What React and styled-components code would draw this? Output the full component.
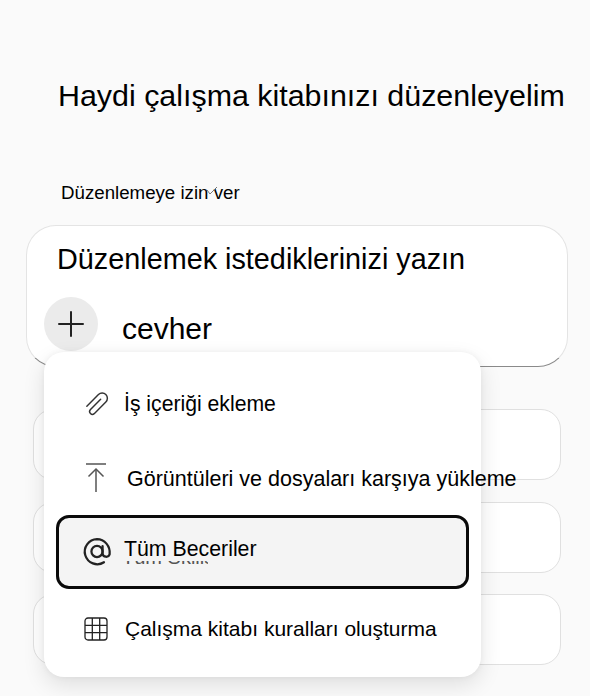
import React from 'react'
import styled, { createGlobalStyle } from 'styled-components'

const GlobalStyle = createGlobalStyle`
  html, body { margin: 0; padding: 0; background: #fafafa; }
  body { font-family: "Liberation Sans", Arial, sans-serif; color: #000; }
`

const Page = styled.div`
  position: relative;
  width: 590px;
  height: 696px;
  overflow: hidden;
  padding: 75px 22px 0 26px;
  box-sizing: border-box;
`

const Heading = styled.h1`
  margin: 0 0 0 32px;
  font-size: 30.4px;
  line-height: 40px;
  font-weight: 400;
  white-space: nowrap;
`

const PermissionRow = styled.div`
  position: relative;
  margin: 62px 0 0 35px;
  font-size: 18.7px;
  line-height: 32px;
  height: 32px;
`

const Tick = styled.svg`
  position: absolute;
  left: 145px;
  top: 9px;
`

const PromptCard = styled.div`
  margin-top: 16px;
  height: 142px;
  box-sizing: border-box;
  background: #fff;
  border: 1px solid #e4e4e4;
  border-bottom-color: #8a8a8a;
  border-radius: 30px;
  padding: 13px 17px 0 17px;
`

const PromptTitle = styled.div`
  margin-left: 13px;
  font-size: 28.8px;
  line-height: 40px;
  white-space: nowrap;
`

const PromptRow = styled.div`
  display: flex;
  align-items: center;
  gap: 24px;
  margin-top: 18px;
`

const AddButton = styled.div`
  width: 54px;
  height: 54px;
  border-radius: 50%;
  background: #ebebeb;
  display: flex;
  align-items: center;
  justify-content: center;
`

const PromptValue = styled.div`
  font-size: 30px;
  line-height: 40px;
  margin-top: 10px;
`

const Suggestions = styled.div`
  display: flex;
  flex-direction: column;
  gap: 21.5px;
  margin: 42px 7px 0;
`

const Suggestion = styled.div`
  height: 71px;
  box-sizing: border-box;
  background: #fff;
  border: 1px solid #e0e0e0;
  border-radius: 20px;
`

const Menu = styled.div`
  position: absolute;
  left: 44px;
  top: 352px;
  width: 437px;
  height: 325px;
  box-sizing: border-box;
  padding: 17px 12px 0;
  background: #fff;
  border-radius: 20px;
  box-shadow: 0 8px 22px rgba(0, 0, 0, 0.11), 0 0 6px rgba(0, 0, 0, 0.05);
`

const MenuItem = styled.div`
  display: flex;
  align-items: center;
  box-sizing: border-box;
  height: ${p => p.$height}px;
  padding-left: ${p => p.$iconLeft}px;
  gap: ${p => p.$gap}px;
  white-space: nowrap;
  ${p => p.$active && `
    position: relative;
    margin-bottom: 2px;
    background: #f4f4f4;
    border: 3px solid #0a0a0a;
    border-radius: 13px;
  `}
`

const MenuIcon = styled.svg`
  flex: none;
  color: #3a3a3a;
`

const MenuText = styled.span`
  position: relative;
  top: ${p => p.$shift || 0}px;
  font-size: ${p => p.$size}px;
`

const GhostText = styled.span`
  position: absolute;
  left: -2px;
  top: 24px;
  height: 4px;
  width: 86px;
  overflow: hidden;
  color: #555;
  font-size: 20px;
  line-height: 4px;
`

const GhostInner = styled.span`
  display: block;
  margin-top: -15px;
  line-height: 22px;
`

const PaperclipIcon = () => (
  <MenuIcon width="27" height="30" viewBox="0 0 26 28" fill="none" stroke="#333" strokeWidth="1.4" strokeLinecap="round">
    <path d="M17 9.5 L7 19.5 a2.7 2.7 0 0 0 3.8 3.8 L22 12 a5 5 0 0 0 -7.1 -7.1 L3.7 16.2" />
  </MenuIcon>
)

const UploadIcon = () => (
  <MenuIcon width="22" height="30" viewBox="0 0 22 30" fill="none" stroke="#555" strokeWidth="1.5">
    <path d="M1 2h20" />
    <path d="M11 7v23" />
    <path d="M3.5 14.5 11 7l7.5 7.5" />
  </MenuIcon>
)

const AtIcon = () => (
  <MenuIcon width="30" height="30" viewBox="0 0 28 28" fill="none" stroke="#222" strokeWidth="2.1" strokeLinecap="round">
    <circle cx="14" cy="13.5" r="5.2" />
    <path d="M19.2 8.5v7a3.4 3.4 0 0 0 6.6 0.6 C26.6 8.5 21 2 14 2 A11.7 11.7 0 1 0 20.5 23.6" />
  </MenuIcon>
)

const GridIcon = () => (
  <MenuIcon width="24" height="24" viewBox="0 0 24 24" fill="none" stroke="#222" strokeWidth="1.3">
    <rect x="1" y="1" width="22" height="22" rx="3" />
    <path d="M8.3 1v22M15.7 1v22M1 8.3h22M1 15.7h22" />
  </MenuIcon>
)

export default function App() {
  return (
    <Page>
      <GlobalStyle />
      <Heading>Haydi çalışma kitabınızı düzenleyelim</Heading>
      <PermissionRow>
        Düzenlemeye izin ver
        <Tick width="12" height="10" viewBox="0 0 12 10" fill="none" stroke="#777" strokeWidth="1">
          <path d="M1 4l3 4 7-7" />
        </Tick>
      </PermissionRow>
      <PromptCard>
        <PromptTitle>Düzenlemek istediklerinizi yazın</PromptTitle>
        <PromptRow>
          <AddButton>
            <svg width="28" height="28" viewBox="0 0 28 28" fill="none" stroke="#222" strokeWidth="2" strokeLinecap="round">
              <path d="M14 2v24M2 14h24" />
            </svg>
          </AddButton>
          <PromptValue>cevher</PromptValue>
        </PromptRow>
      </PromptCard>
      <Suggestions>
        <Suggestion />
        <Suggestion />
        <Suggestion />
      </Suggestions>
      <Menu>
        <MenuItem $height={70} $iconLeft={27} $gap={14}>
          <PaperclipIcon />
          <MenuText $size={21.2}>İş içeriği ekleme</MenuText>
        </MenuItem>
        <MenuItem $height={76} $iconLeft={29} $gap={20}>
          <UploadIcon />
          <MenuText $size={21.5} $shift={2}>Görüntüleri ve dosyaları karşıya yükleme</MenuText>
        </MenuItem>
        <MenuItem $active $height={74} $iconLeft={23} $gap={12}>
          <AtIcon />
          <MenuText $size={21.3} $shift={-3}>
            Tüm Beceriler
            <GhostText aria-hidden="true"><GhostInner>Tüm Skills</GhostInner></GhostText>
          </MenuText>
        </MenuItem>
        <MenuItem $height={76} $iconLeft={28} $gap={17}>
          <GridIcon />
          <MenuText $size={21} $shift={0}>Çalışma kitabı kuralları oluşturma</MenuText>
        </MenuItem>
      </Menu>
    </Page>
  )
}
